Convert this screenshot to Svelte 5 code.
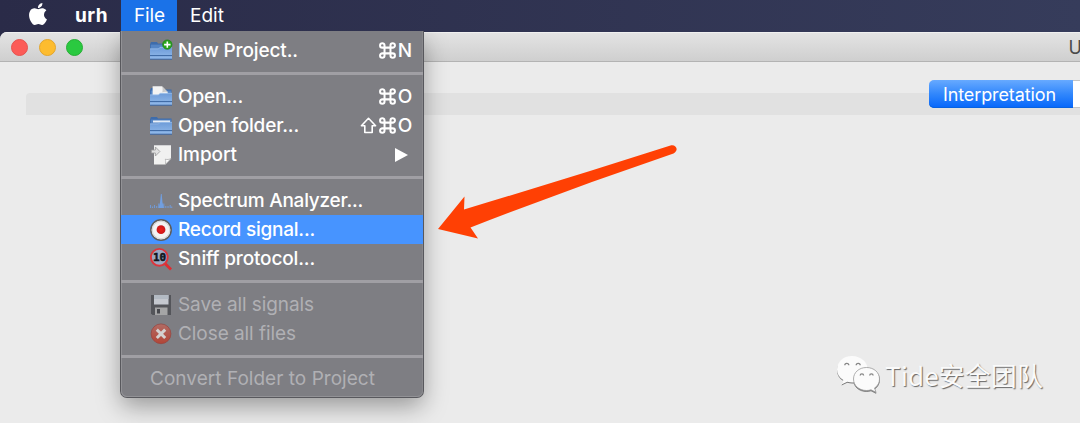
<script>
  const groups = [
    [{ label: 'New Project..', icon: 'new', keys: 'N', w: 120 }],
    [
      { label: 'Open...', icon: 'open', keys: 'O', w: 65 },
      { label: 'Open folder...', icon: 'folder', keys: 'O', shift: true, w: 121 },
      { label: 'Import', icon: 'import', sub: true, w: 59 }
    ],
    [
      { label: 'Spectrum Analyzer...', icon: 'spectrum', w: 185 },
      { label: 'Record signal...', icon: 'record', active: true, w: 137 },
      { label: 'Sniff protocol...', icon: 'sniff', w: 137 }
    ],
    [
      { label: 'Save all signals', icon: 'save', disabled: true, w: 136 },
      { label: 'Close all files', icon: 'close', disabled: true, w: 118 }
    ],
    [{ label: 'Convert Folder to Project', disabled: true, w: 225 }]
  ];

  // Tracks the letters so that a label takes up the given width.
  function fit(node, width) {
    const count = [...node.textContent].length;
    const natural = node.getBoundingClientRect().width;
    node.style.letterSpacing = `${(width - natural) / count}px`;
  }
</script>

{#snippet glyph(name)}
  <svg class="icon" viewBox="0 0 22 22">
    {#if name === 'new' || name === 'folder' || name === 'open'}
      <path d="M0 4.2 1 2h6l1 1.6h13.5V11H0z" fill="#3e6cab" />
      <path d="M.8 4.6h20.4V9H.8z" fill="#5585c4" />
      {#if name === 'open'}
        <path d="M2.6 11V.3H12L17.7 6v5z" fill="#f3f3f3" />
        <path d="M12 .3c.8 2.2.8 4 .3 5.9 2-.7 3.8-.7 5.6 0z" fill="#c9c9c9" />
      {/if}
      {#if name === 'folder'}
        <path d="M3 5.5h17v2H3z" fill="#e9eff7" />
      {/if}
      <path d="M0 8.8h8.5l1.6-1.6H22V19.3H0z" fill="url(#blue)" />
      <path d="M0 8.9h8.5l1.6-1.6H22" fill="none" stroke="#a6c7ef" stroke-width=".7" />
      <path d="M0 15.6h22M0 19.2h22" stroke="#315c98" stroke-width=".9" />
      {#if name === 'new'}
        <circle cx="17.3" cy="4.6" r="4.7" fill="#29a51b" stroke="#15800d" stroke-width=".6" />
        <path d="M17.3 1.4v6.4M14.1 4.6h6.4" stroke="#fff" stroke-width="1.6" />
      {/if}
    {:else if name === 'import'}
      <path d="M4 1.2h17v13.3L15.3 20.6H4z" fill="#f1f1f0" />
      <path d="M21 14.5 15.3 20.6c.5-2 .6-3.6 0-5.4 2 .5 3.7.4 5.7-.7z" fill="#fff" stroke="#aaa" stroke-width=".8" />
      <path d="M1.4 6h4V3l4.5 4.5L5.4 12V9h-4z" fill="#e0e0e0" stroke="#999" stroke-width=".8" />
    {:else if name === 'spectrum'}
      <path d="M.5 18v-3M2.5 18v-1.5M4.5 18v-3M6.7 18v-2M8.8 18v-4.5M13.8 18v-4.5M15.800 18v-2M18 18v-2M20.200 18v-3M21.700 18v-1.500" stroke="#7199d4" stroke-width="1.100" />
      <path d="M8.500 18 10 12.500 10.900 4h.8l.8 8.500L14 18z" fill="#719fe0" />
    {:else if name === 'record'}
      <circle cx="11" cy="11" r="10.2" fill="#f3f3f3" stroke="#5c5c5c" stroke-width="1.5" />
      <circle cx="11" cy="11" r="8.7" fill="none" stroke="#c7c7c7" stroke-width=".7" />
      <circle cx="11" cy="10.7" r="4.4" fill="url(#red)" />
    {:else if name === 'sniff'}
      <path d="M15 15.5 21 21.5" stroke="#e12b30" stroke-width="2.8" />
      <circle cx="9.3" cy="9.3" r="8.4" fill="#9ba9c3" stroke="#dc353c" stroke-width="1.9" />
      <text x="9.5" y="13.2" text-anchor="middle" class="bits">10</text>
    {:else if name === 'save'}
      <path d="M1 1h20v20H2.5L1 19.5z" fill="#505156" />
      <path d="M4 1h14.5v9.5H4z" fill="#cdd1d8" />
      <path d="M4 1h14.5v4H4z" fill="#b9c1cb" />
      <path d="M5 13.5h12.5V21H5z" fill="#aaa" />
      <path d="M7 15h3v4.5H7z" fill="#424348" />
    {:else if name === 'close'}
      <circle cx="11" cy="10.8" r="9.9" fill="url(#dim)" stroke="#9b3c37" stroke-width=".7" />
      <path d="m6.8 6.6 8.4 8.4m0-8.4-8.4 8.4" stroke="#dedbd9" stroke-width="3" />
    {/if}
  </svg>
{/snippet}

<svg class="defs" width="0" height="0">
  <defs>
    <linearGradient id="blue" x1="0" y1="0" x2="0" y2="1">
      <stop offset="0" stop-color="#6d9bd8" />
      <stop offset="1" stop-color="#93bbeb" />
    </linearGradient>
    <radialGradient id="red"><stop offset="0" stop-color="#ee2018" /><stop offset="1" stop-color="#c9161b" /></radialGradient>
    <linearGradient id="dim" x1="0" y1="0" x2="0" y2="1">
      <stop offset="0" stop-color="#b86a62" />
      <stop offset="1" stop-color="#b8402f" />
    </linearGradient>
  </defs>
</svg>

<div class="screen">
  <header class="menubar">
    <svg class="apple" viewBox="0 0 24 24">
      <path d="M12.152 6.896c-.948 0-2.415-1.078-3.96-1.040-2.040.027-3.910 1.183-4.961 3.014-2.117 3.675-.546 9.103 1.519 12.090 1.013 1.454 2.208 3.090 3.792 3.039 1.520-.065 2.090-.987 3.935-.987 1.831 0 2.350.987 3.960.948 1.637-.026 2.676-1.480 3.676-2.948 1.156-1.688 1.636-3.325 1.662-3.415-.039-.013-3.182-1.221-3.220-4.857-.026-3.040 2.480-4.494 2.597-4.559-1.429-2.090-3.623-2.324-4.390-2.376-2-.156-3.675 1.090-4.610 1.090zM15.530 3.830c.843-1.012 1.400-2.427 1.245-3.830-1.207.052-2.662.805-3.532 1.818-.780.896-1.454 2.338-1.273 3.714 1.338.104 2.715-.688 3.559-1.701" fill="#fff" />
    </svg>
    <span class="entry app"><span use:fit={33}>urh</span></span>
    <span class="entry file"><span use:fit={31}>File</span></span>
    <span class="entry"><span use:fit={34}>Edit</span></span>
  </header>

  <main class="window">
    <div class="titlebar">
      <i class="light red"></i><i class="light yellow"></i><i class="light green"></i>
      <span class="title">U</span>
    </div>
    <div class="content">
      <div class="strip"></div>
      <div class="tabs">
        <button class="tab on"><span use:fit={113}>Interpretation</span></button>
        <div class="tab"></div>
      </div>
    </div>
  </main>

  <nav class="menu">
    {#each groups as group, g}
      {#if g}<hr class:short={g === 4} />{/if}
      {#each group as item}
        <div class="item" class:active={item.active} class:disabled={item.disabled}>
          {#if item.icon}{@render glyph(item.icon)}{/if}
          <span class="label"><span use:fit={item.w}>{item.label}</span></span>
          {#if item.shift}
            <svg class="shift" viewBox="0 0 17 17"><path d="M8.5 1.3 15.6 8.7h-3.4v6.8H4.8V8.7H1.4z" fill="none" stroke="#fff" stroke-width="1.6" stroke-linejoin="round" /></svg>
          {/if}
          {#if item.keys}
            <svg class="cmd" viewBox="0 0 16 16"><path d="M5.2 5.2V3.2a2.1 2.1 0 1 0-2.1 2.1h9.8a2.1 2.1 0 1 0-2.1-2.1v9.6a2.1 2.1 0 1 0 2.1-2.1H3.1a2.1 2.1 0 1 0 2.1 2.1z" fill="none" stroke="#fff" stroke-width="1.9" /></svg>
            <span class="key">{item.keys}</span>
          {/if}
          {#if item.sub}
            <svg class="sub" viewBox="0 0 13 14"><path d="M0 0 13 7 0 14z" fill="#fff" /></svg>
          {/if}
        </div>
      {/each}
    {/each}
  </nav>

  <svg class="arrow" viewBox="0 0 242 98">
    <path d="M1 86 27.5 53.5 27 66.5Q132 35 233.5 2.4C239 1 242.5 7 236.5 10.6Q135 45 33.5 84.5L41 95.5z" fill="#ff4004" />
  </svg>

  <div class="mark">
    <svg viewBox="0 0 46 40">
      <path d="M16 1C7 1 1 7 1 14.5c0 4.5 2.3 8 6.3 10.5L5.5 29.5 11.3 26.8c1.6.5 3.2.7 5 .7 9 0 15.7-6 15.7-13S25 1 16 1z" />
      <path class="front" d="M30.5 12.5c-7.5 0-13 5-13 11.5s5.5 11.5 13 11.5c1.7 0 3-.2 4.5-.7l5 2.5-1.5-4.2c3.4-2.3 5-5.4 5-9.1 0-6.5-5.5-11.5-13-11.5z" />
      <g class="eyes"><path d="M8.8 10.3a2 2 0 0 1 4 0M20.2 10.3a2 2 0 0 1 4 0M24.2 20.5a1.7 1.7 0 0 1 3.4 0M33.7 20.5a1.7 1.7 0 0 1 3.4 0" /></g>
    </svg>
    <span use:fit={158}>Tide安全团队</span>
  </div>
</div>

<style>
  :global(body) { margin: 0; overflow: hidden; }
  .defs { position: absolute; }
  .screen {
    position: relative; width: 1080px; height: 423px; overflow: hidden;
    display: flex; flex-direction: column; box-sizing: border-box;
    background: linear-gradient(90deg, #2a2b48, #363c5b);
    font-family: Inter, "Liberation Sans", sans-serif; font-size: 19px;
  }
  .menubar { height: 31px; flex: none; display: flex; align-items: center; color: #fff; }
  .apple { width: 22px; height: 22px; margin: 0 0 3px 27px; }
  .entry { height: 31px; padding: 0 13px; display: flex; align-items: center; white-space: nowrap; }
  .entry span { display: inline-block; }
  .app { font-weight: 700; margin-left: 13px; }
  .entry.file { background: #1a72e8; padding-right: 12px; }
  .window {
    flex: 1; margin-top: 1px; display: flex; flex-direction: column;
    background: #ebebeb; border-top-left-radius: 7px; overflow: hidden;
  }
  .titlebar {
    height: 30px; flex: none; box-sizing: border-box; display: flex; align-items: center;
    padding-left: 11px; gap: 10.5px; border-top: 1px solid #f0f0f0; border-bottom: 1px solid #b3b3b3;
    background: linear-gradient(#e3e3e3, #cfcfcf);
  }
  .light { width: 17px; height: 17px; border-radius: 50%; flex: none; box-sizing: border-box; }
  .red { background: #fc5b57; border: 1px solid #e5534f; }
  .yellow { background: #fdbc2f; border: 1px solid #e2a52d; }
  .green { background: #2ac940; border: 1px solid #27ae35; }
  .title { margin-left: 975px; color: #4a4a4a; white-space: nowrap; font-size: 18px; }
  .content { display: grid; padding: 18px 0 0 26px; grid-template-columns: 903px 151px; align-items: start; }
  .strip { grid-area: 1 / 1 / 2 / 3; height: 22px; margin-top: 13px; border-radius: 4px 0 0 0; background: #e1e1e1; }
  .tabs { grid-area: 1 / 2; height: 28px; display: flex; }
  .tab { flex: 1; box-sizing: border-box; background: #fff; border: solid #c5c5c5; border-width: 1px 0; }
  .tab.on {
    flex: 0 0 144px; padding: 0 0 0 14px; text-align: left; border: 0; border-radius: 5px 0 0 5px;
    color: #fff; font: 18px Inter, sans-serif; white-space: nowrap;
    background: linear-gradient(#67aaff, #3187fc 50%, #0566fb);
    box-shadow: inset 0 -1px #0862e0;
  }
  .tab.on span { display: inline-block; }
  .menu {
    position: absolute; left: 121px; top: 31px; width: 302px; height: 366px; box-sizing: border-box;
    padding-top: 5px; background: #7e7e83; border-radius: 0 0 6px 6px; color: #fff; font-weight: 500;
    box-shadow: 0 0 0 1px #58585d, inset 1px 0 #929296, inset -1px 0 #88888c, inset 0 -1px #929296, 0 9px 24px rgba(0, 0, 0, .36);
    clip-path: inset(0 -60px -60px -60px);
  }
  hr { height: 3px; margin: 7px 0; border: 0; background: #a09fa4; }
  hr.short { margin-bottom: 6px; }
  .item { height: 29px; display: flex; align-items: center; padding: 0 11px 0 29px; }
  .active { background: #4794ff; }
  .disabled { color: #b0b0b4; font-weight: 400; }
  .icon { width: 22px; height: 22px; margin-right: 6px; flex: none; overflow: visible; }
  .disabled .icon { opacity: .9; }
  .bits { font: 700 11px "DejaVu Sans Mono", monospace; fill: #11151c; stroke: #11151c; stroke-width: .5; }
  .label { flex: 1; white-space: nowrap; }
  .label span { display: inline-block; }
  .cmd { width: 17px; height: 17px; margin-right: 2px; }
  .shift { width: 17px; height: 17px; margin-right: 2px; }
  .key { width: 14px; display: flex; justify-content: center; }
  .sub { width: 13px; height: 14px; margin-right: 4px; }
  .arrow { position: absolute; left: 437px; top: 142.5px; width: 242px; height: 98px; }
  .mark {
    position: absolute; left: 836px; top: 355px; display: flex; align-items: center; color: #fafafa;
    font: 400 26px/40px "Noto Sans CJK SC", sans-serif; white-space: nowrap;
    text-shadow: 1px 1px 1px #666;
  }
  .mark svg { width: 46px; height: 40px; margin-right: 3px; fill: #fbfbfb; filter: drop-shadow(.5px 1px .6px #777); }
  .mark .front { stroke: #9a9a9a; stroke-width: .8; }
  .mark .eyes { fill: none; stroke: #858585; stroke-width: 1.3; }
  .mark span { display: inline-block; }
</style>
